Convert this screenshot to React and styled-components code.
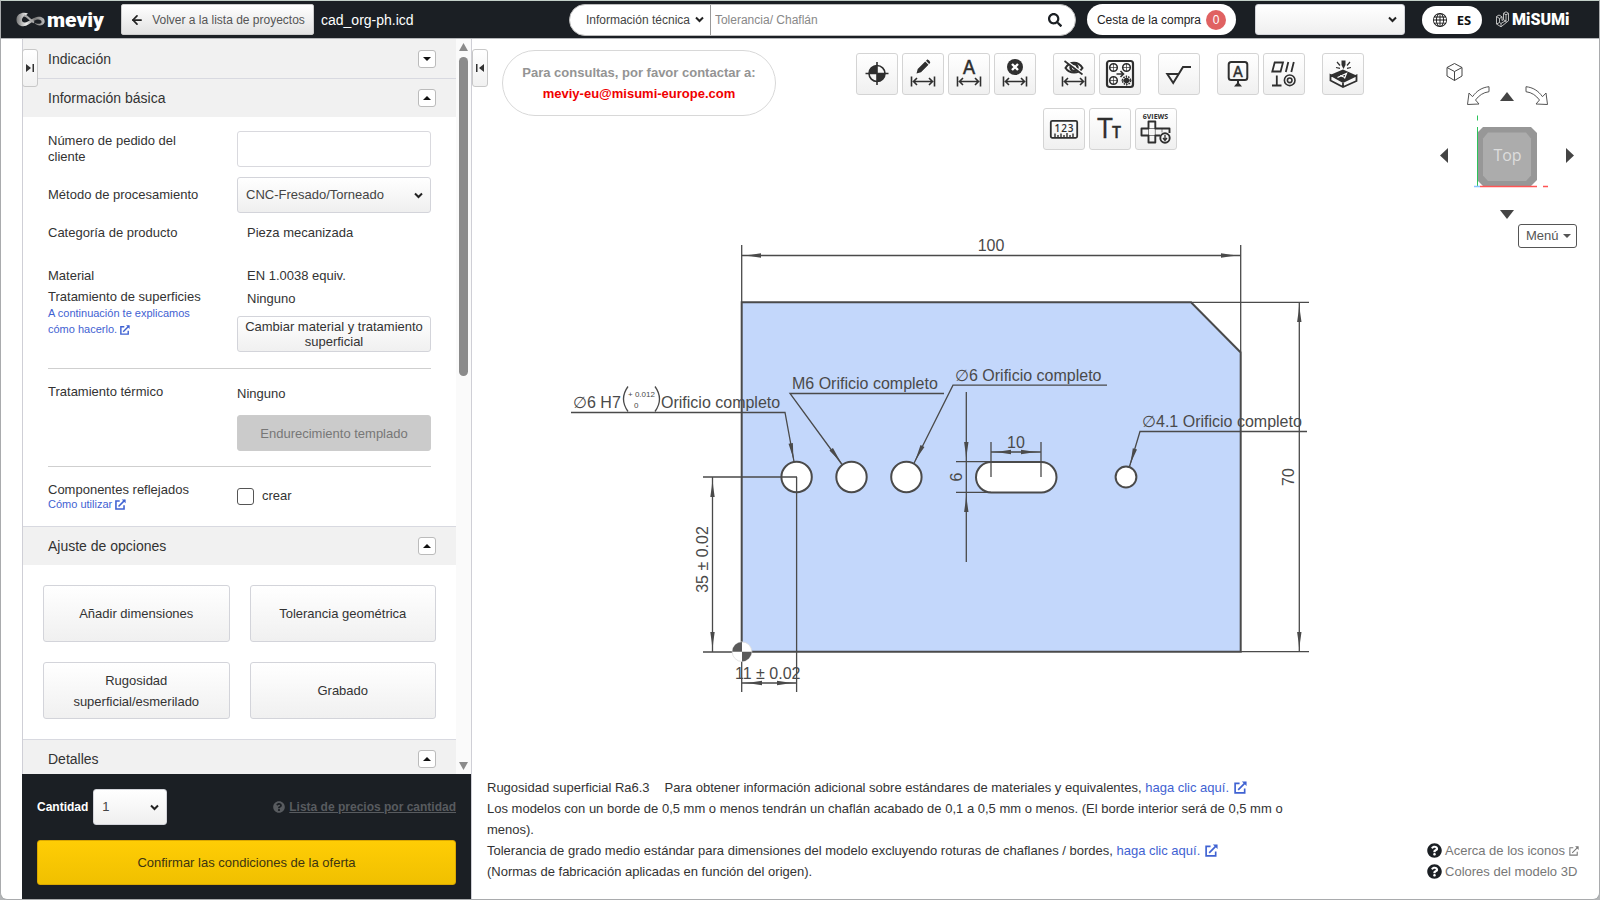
import styled, { createGlobalStyle } from "styled-components";
import { ArrowLeft } from "lucide-react";
import { FaSearch, FaQuestionCircle } from "react-icons/fa";
import { BsGlobe } from "react-icons/bs";

const GlobalStyle = createGlobalStyle`
  * {
    box-sizing: border-box;
  }
  body {
    margin: 0;
    background: #b4b6b8;
    font-family: "Liberation Sans", Arial, sans-serif;
    font-size: 13px;
    line-height: 16px;
    color: #333;
  }
  button, input, select {
    font: inherit;
    color: inherit;
    margin: 0;
  }
  button {
    cursor: pointer;
    padding: 0;
  }
  a {
    color: #3f62d2;
    text-decoration: none;
  }
  svg {
    display: block;
  }
`;

const Page = styled.div`
  height: 100vh;
  display: flex;
  flex-direction: column;
  background: #fff;
  border: 1px solid #a9abad;
  border-top-color: #c3d0c8;
  border-radius: 0 0 7px 7px;
  overflow: hidden;
`;

/* header */

const Header = styled.header`
  flex: none;
  height: 38px;
  display: flex;
  align-items: center;
  background: #1b1f24;
  border-bottom: 1px solid #b5b7ba;
  color: #fff;
  padding: 0 29px 0 15px;
`;
const Meviy = styled.div`
  display: flex;
  align-items: center;
  gap: 2px;
  width: 105px;
  font-family: Roboto, sans-serif;
  font-weight: 900;
  font-size: 21px;
  line-height: 30px;
`;
const BackButton = styled.button`
  height: 31px;
  width: 193px;
  display: flex;
  align-items: center;
  justify-content: center;
  gap: 8px;
  border: 1px solid #ccc;
  border-radius: 2px;
  background: linear-gradient(#fff, #e2e2e2);
  color: #555;
  font-size: 12px;
  svg {
    color: #222;
  }
`;
const FileName = styled.h1`
  margin: 0 auto 0 7px;
  font-size: 14px;
  font-weight: 400;
`;
const SearchForm = styled.form`
  display: flex;
  align-items: center;
  width: 507px;
  height: 32px;
  padding: 0 13px 0 8px;
  border-radius: 16px;
  background: #fff;
  border: 1px solid #bbb;
  color: #333;
  font-size: 12px;
  input {
    flex: 1;
    min-width: 0;
    height: 30px;
    border: 0;
    border-left: 1px solid #999;
    padding: 0 4px;
    outline: none;
  }
  input::placeholder {
    color: #888;
    opacity: 1;
  }
  button {
    border: 0;
    background: none;
    color: #1b1f24;
  }
`;
const Cart = styled.a`
  display: flex;
  align-items: center;
  gap: 5px;
  height: 31px;
  margin-left: 11px;
  padding: 0 10px;
  border-radius: 16px;
  background: #fff;
  color: #222;
  font-size: 12px;
`;
const Badge = styled.span`
  width: 20px;
  border-radius: 10px;
  background: #e06262;
  color: #fff;
  text-align: center;
  line-height: 20px;
`;
const Language = styled.button`
  display: flex;
  align-items: center;
  justify-content: center;
  gap: 10px;
  width: 60px;
  height: 28px;
  margin: 0 14px 0 17px;
  border: 0;
  border-radius: 14px;
  background: #fff;
  color: #111;
  font: 700 13px "Open Sans", sans-serif;
`;
const Misumi = styled.div`
  display: flex;
  align-items: center;
  gap: 3px;
  width: 74px;
  font: 900 16px/30px Roboto, sans-serif;
`;

/* form controls */

const SelectWrap = styled.span`
  display: inline-grid;
  align-items: center;
  width: ${(props) => props.$width || "100%"};
  margin-left: ${(props) => props.$left || "0"};
  select {
    grid-area: 1 / 1;
    width: 100%;
    height: ${(props) => props.$height || "36px"};
    padding: 0 16px 0 8px;
    appearance: none;
    outline: none;
    border: ${(props) => (props.$plain ? "0" : "1px solid #d3d4da")};
    border-radius: 3px;
    background: ${(props) => (props.$plain ? "#fff" : "linear-gradient(#fff, #efefef)")};
    color: #444;
  }
  svg {
    grid-area: 1 / 1;
    justify-self: end;
    margin-right: ${(props) => (props.$plain ? "6px" : "8px")};
    pointer-events: none;
  }
`;
const TextBox = styled.input`
  width: 100%;
  height: 36px;
  padding: 0 8px;
  border: 1px solid #d9d9de;
  border-radius: 3px;
`;
const Button = styled.button`
  width: 100%;
  height: ${(props) => (props.$tall ? "57px" : "36px")};
  border: 1px solid #d3d4da;
  border-radius: 3px;
  background: linear-gradient(#fff, #f0f0f0);
  color: #333;
  line-height: ${(props) => (props.$tall ? "21px" : "15px")};
  &:disabled {
    border-color: #ccc;
    background: #cbcbcb;
    color: #777;
    cursor: default;
  }
`;

/* sidebar */

const Body = styled.div`
  flex: 1;
  min-height: 0;
  display: flex;
  padding-left: 21px;
`;
const Sidebar = styled.aside`
  position: relative;
  flex: none;
  width: 450px;
  display: flex;
  flex-direction: column;
  border: 0 solid #cfcfd6;
  border-width: 0 1px 0 1px;
`;
const Scroller = styled.div`
  flex: 1;
  min-height: 0;
  display: flex;
`;
const Sections = styled.div`
  flex: 1;
  overflow: hidden;
`;
const ScrollTrack = styled.div`
  width: 15px;
  display: flex;
  flex-direction: column;
  align-items: center;
  padding: 4px 0;
  background: #fafafa;
`;
const ScrollThumb = styled.div`
  width: 9px;
  height: 319px;
  margin: 6px 0 auto;
  border-radius: 5px;
  background: #8b8b8b;
`;
const SectionHead = styled.div`
  display: flex;
  align-items: center;
  justify-content: space-between;
  height: 39px;
  padding: 0 20px 0 25px;
  border-top: 1px solid ${(props) => (props.$first ? "#f1f1f1" : "#d8d9e0")};
  background: #f1f1f1;
  h2 {
    margin: 0;
    font-size: 14px;
    font-weight: 400;
  }
  button {
    width: 18px;
    height: 18px;
    display: grid;
    place-items: center;
    border: 1px solid #bbb;
    border-radius: 3px;
    background: #fff;
    color: #111;
  }
`;
const Form = styled.div`
  padding: 14px 25px 16px;
`;
const Row = styled.div`
  display: grid;
  grid-template-columns: 160px 194px;
  justify-content: start;
  column-gap: 29px;
  align-items: ${(props) => props.$align || "center"};
  margin-top: ${(props) => props.$gap || "0"};
  label, p {
    margin: 0;
  }
`;
const Value = styled.div`
  padding: ${(props) => (props.$flush ? "2px 0" : "2px 10px")};
  margin-bottom: ${(props) => props.$below || "0"};
`;
const Hint = styled.a`
  display: ${(props) => (props.$block ? "block" : "flex")};
  gap: 3px;
  align-items: center;
  font-size: 11px;
  line-height: ${(props) => (props.$block ? "16px" : "12px")};
  svg {
    display: inline-block;
    vertical-align: -2px;
  }
`;
const Rule = styled.hr`
  width: 383px;
  margin: ${(props) => props.$top} 0 0;
  border: 0;
  border-top: 1px solid #cfcfcf;
`;
const Check = styled.label`
  display: flex;
  align-items: center;
  gap: 8px;
  input {
    appearance: none;
    width: 17px;
    height: 17px;
    border: 1px solid #555;
    border-radius: 3px;
    background: #fff;
  }
`;
const Options = styled.div`
  display: grid;
  grid-template-columns: 1fr 1fr;
  gap: 20px;
  padding: 20px;
`;
const Order = styled.div`
  flex: none;
  height: 125px;
  margin-left: -1px;
  padding: 15px;
  background: #1b1f24;
  color: #fff;
`;
const OrderRow = styled.div`
  display: flex;
  align-items: center;
  gap: 5px;
  font-size: 12px;
  font-weight: 700;
  select {
    font-size: 13px;
    font-weight: 400;
  }
`;
const PriceLink = styled.a`
  display: flex;
  gap: 4px;
  align-items: center;
  margin-left: auto;
  color: #585b5f;
  span {
    text-decoration: underline;
  }
`;
const Confirm = styled.button`
  width: 100%;
  height: 45px;
  margin-top: 15px;
  border: 1px solid #dba800;
  border-radius: 3px;
  background: linear-gradient(#ffcd05, #f0c000);
  color: #3c3411;
`;
const Handle = styled.button`
  position: absolute;
  top: 10px;
  ${(props) => (props.$right ? "right: -17px;" : "left: -1px;")}
  width: 16px;
  height: 38px;
  display: grid;
  place-items: center;
  border: 1px solid #c8c8c8;
  border-radius: 3px;
  background: linear-gradient(#fff, #f1f1f1);
  z-index: 1;
`;

/* viewer */

const Viewer = styled.main`
  flex: 1;
  min-width: 0;
  display: flex;
  flex-direction: column;
`;
const Stage = styled.div`
  flex: 1;
  min-height: 0;
  display: flex;
`;
const Work = styled.div`
  flex: 1;
  min-width: 0;
`;
const Top = styled.div`
  display: flex;
  height: 196px;
  padding: 11px 0 0 30px;
`;
const Contact = styled.div`
  flex: none;
  width: 274px;
  height: 66px;
  padding: 11px 0;
  border: 1px solid #d8d8d8;
  border-radius: 33px;
  text-align: center;
  font-weight: 700;
  line-height: 21px;
  color: #949494;
  a {
    color: #f00000;
  }
`;
const Toolbar = styled.div`
  flex: 1;
  display: flex;
  flex-direction: column;
  align-items: center;
  gap: 13px;
  padding: 3px 0 0 6px;
`;
const ToolRow = styled.div`
  display: flex;
  gap: 17px;
`;
const ToolGroup = styled.div`
  display: flex;
  gap: 4px;
`;
const Tool = styled.button`
  width: 42px;
  height: 42px;
  border: 1px solid #d4d4d4;
  border-radius: 3px;
  background: linear-gradient(#fff, #f0f0f0);
  color: #2f2f2f;
`;
const Drawing = styled.svg`
  width: 760px;
  max-width: 100%;
  height: 465px;
  margin-left: 88px;
  font-family: "Liberation Sans", Arial, sans-serif;
  font-size: 16px;
`;
const Navigator = styled.div`
  flex: none;
  width: 162px;
  padding: 23px 22px 0 0;
  display: flex;
  flex-direction: column;
  align-items: center;
`;
const NavButton = styled.button`
  border: 0;
  background: none;
  color: #444;
  align-self: ${(props) => props.$self || "auto"};
  margin: ${(props) => props.$space || "0"};
`;
const NavRow = styled.div`
  display: flex;
  align-items: center;
  justify-content: space-between;
  width: ${(props) => props.$width};
  margin-top: ${(props) => props.$gap};
`;
const MenuButton = styled.button`
  align-self: flex-end;
  display: flex;
  align-items: center;
  justify-content: space-between;
  width: 59px;
  height: 24px;
  margin-top: 5px;
  padding: 0 5px 0 7px;
  border: 1px solid #555;
  border-radius: 3px;
  background: #fff;
  color: #555;
`;
const Notes = styled.footer`
  flex: none;
  display: flex;
  justify-content: space-between;
  align-items: flex-end;
  padding: 0 20px 17px 15px;
  line-height: 21px;
  p {
    margin: 0;
    max-width: 810px;
  }
  svg {
    display: inline-block;
    vertical-align: -2px;
    margin-left: 1px;
  }
`;
const Ra = styled.span`
  margin-right: 15px;
`;
const Help = styled.div`
  display: flex;
  flex-direction: column;
  a {
    display: flex;
    align-items: center;
    gap: 3px;
    color: #777;
  }
  a svg:first-child {
    color: #1b1f24;
  }
`;

/* small icons */

const Chevron = ({ size = 9, color = "#222" }) => (
  <svg width={size} height={size} viewBox="0 0 9 9" fill="none" stroke={color} strokeWidth="2">
    <path d="M1 2.5l3.5 3.5L8 2.5" />
  </svg>
);

const External = ({ size = 13, stroke = 1.8 }) => (
  <svg width={size} height={size} viewBox="0 0 14 14" fill="none" stroke="currentColor" strokeWidth={stroke}>
    <path d="M6 2.5H1.2v10.3h10.3V8M4.5 9.5L12.5 1.5" />
    <path d="M8.5 .5h5v5z" fill="currentColor" stroke="none" />
  </svg>
);

const Triangle = ({ dir, w = 9, h = 5, color = "currentColor" }) => {
  const points = {
    up: `0,${h} ${w / 2},0 ${w},${h}`,
    down: `0,0 ${w},0 ${w / 2},${h}`,
    left: `${w},0 0,${h / 2} ${w},${h}`,
    right: `0,0 ${w},${h / 2} 0,${h}`,
  };
  return (
    <svg width={w} height={h} fill={color}>
      <polygon points={points[dir]} />
    </svg>
  );
};

const MeviyMark = () => (
  <svg width="29" height="16" viewBox="0 0 29 16" fill="none">
    <defs>
      <linearGradient id="mark" x1="0" x2="1">
        <stop offset="0" stopColor="#777" />
        <stop offset="0.35" stopColor="#eee" />
        <stop offset="0.65" stopColor="#777" />
        <stop offset="1" stopColor="#bbb" />
      </linearGradient>
    </defs>
    <path
      d="M12 1.500C7-.5 1 1.500.5 7C0 12.500 5 15.500 10 13.800C14 12.400 17 8.500 21 7.500C24 7 26 8.500 25.500 10.500C24.500 12.500 21 12 18 10.500C21 14.500 27 14.500 28.500 10.500C29.500 6 25 4 21 5C16 6 13 10 9 10.500C6.500 10.800 5 8.500 6.500 6C8 3.500 10 3.500 12 1.500Z"
      fill="url(#mark)"
    />
    <path d="M8 3.500C11.500 3.500 13.500 8 18 10.500" stroke="#aaa" strokeWidth="2" />
  </svg>
);

const MisumiMark = () => (
  <svg width="13" height="17" viewBox="0 0 13 17" fill="none" stroke="#ccc" strokeWidth="0.9">
    <path d="M.5 5.500l2.500-1.500 3 1.800v3.700l1.500-.8V2.300L10 .800l2.500 1.500v7.500L5 15.800.500 13zM.500 5.500l3 2v4M3.500 7.500L6 6M7.500 2.300L10 3.800l2.500-1.500M10 3.800v7.700M5 15.800V12.500M5 12.500l5-3M.500 13l3-1.500L5 12.500M7.500 8.700l2.500 1.500" />
  </svg>
);

/* toolbar icons, drawn on the 42px button grid */

const ToolIcon = ({ children }) => (
  <svg width="40" height="40" viewBox="1 1 40 40" fill="none" stroke="currentColor" strokeWidth="1.6">
    {children}
  </svg>
);

const DimensionBar = () => (
  <path d="M9.500 23.500v10M32.500 23.500v10M11.500 28.500h19M15 25l-3.500 3.500L15 32M27 25l3.500 3.500L27 32" />
);

const icons = {
  origin: (
    <>
      <circle cx="21" cy="20.500" r="8" />
      <path d="M21 20.500V12.500A8 8 0 0 0 13 20.500zM21 20.500v8a8 8 0 0 0 8-8z" fill="currentColor" stroke="none" />
      <path d="M21 9v23M9.500 20.500h23" />
    </>
  ),
  edit: (
    <>
      <path d="M14.500 20.500l1.200-4.500 7.500-7.500 3.300 3.300-7.500 7.500zM24 7.700l1-1c.8-.7 3.900 2.300 3.100 3.200l-1 1z" fill="currentColor" stroke="none" />
      <DimensionBar />
    </>
  ),
  text: (
    <>
      <text x="21" y="20.500" textAnchor="middle" fontFamily="Inter" fontSize="19" fontWeight="400" fill="currentColor" strokeWidth="0.400">A</text>
      <DimensionBar />
    </>
  ),
  remove: (
    <>
      <circle cx="21" cy="14" r="8" fill="currentColor" stroke="none" />
      <path d="M18 11l6 6M24 11l-6 6" stroke="#fff" strokeWidth="2.400" />
      <DimensionBar />
    </>
  ),
  hide: (
    <>
      <path d="M12.500 15c4-7 13-7 17 0-4 6-13 6-17 0z" strokeWidth="2" />
      <circle cx="21" cy="14.500" r="3.500" strokeWidth="2.400" />
      <path d="M13.500 8l17 13" stroke="#fff" strokeWidth="2" />
      <path d="M11.500 8l18 13.500" />
      <DimensionBar />
    </>
  ),
  pattern: (
    <>
      <rect x="8" y="8" width="26" height="26" rx="2.500" strokeWidth="2.200" />
      <circle cx="14.500" cy="14.500" r="3.800" />
      <circle cx="27.500" cy="14.500" r="3.800" />
      <circle cx="14.500" cy="27.500" r="3.800" />
      <circle cx="27.500" cy="27.500" r="4" strokeDasharray="1.500 1" />
      <circle cx="27.500" cy="27.500" r="2" fill="currentColor" />
      <path d="M14.500 10.500v8M10.500 14.500h8M27.500 10.500v8M23.500 14.500h8M14.500 23.500v8M10.500 27.500h8M27.500 22.500v10M22.500 27.500h10" strokeWidth="0.700" />
      <path d="M17.500 21h6.500M21.500 18l3 3-3 3" />
    </>
  ),
  roughness: <path d="M20.500 21H9.300L15.200 30 25 14h8" strokeWidth="2" />,
  datum: (
    <>
      <rect x="11.700" y="9" width="18.600" height="18" rx="2.500" strokeWidth="2" />
      <text x="21" y="23.500" textAnchor="middle" fontFamily="Inter" fontSize="15" fontWeight="400" fill="currentColor" strokeWidth="0.400">A</text>
      <path d="M21 27v5" strokeWidth="2" />
      <path d="M17 33.500l2.500-3h3l2.500 3z" fill="currentColor" stroke="none" />
    </>
  ),
  geometric: (
    <>
      <path d="M9.300 18.500l2.400-9h8.300l-2.400 9zM22.800 19l2.500-10M28.300 19l2.500-10M9 32.500h9.500M13.800 22.500v10" strokeWidth="1.800" />
      <circle cx="26.700" cy="27.300" r="5.300" />
      <circle cx="26.700" cy="27.300" r="2.300" />
    </>
  ),
  engrave: (
    <>
      <path d="M8 22l13-5.500 13.500 6L21 29z" fill="currentColor" stroke="none" />
      <path d="M8.500 22v5.500L21 34l13.500-6v-5.500L21 29zM21 29v5" strokeWidth="1.800" />
      <path d="M15.500 24.500l9-4-2 5M18 22.500l5 2" stroke="#fff" strokeWidth="1.200" />
      <path d="M19.500 7.500h4v4.500l-2 4-2-4z" fill="currentColor" stroke="none" />
      <path d="M15 9l3 3.500M28 9l-3 3.500M14 14.500l4 .8M29 14.500l-4 .8" strokeWidth="1.200" />
    </>
  ),
  ruler: (
    <>
      <rect x="7.800" y="12.800" width="26.400" height="17" rx="1.500" strokeWidth="1.800" />
      <text x="21.500" y="23.500" textAnchor="middle" fontFamily="Open Sans" fontSize="10" fontWeight="600" letterSpacing="1" fill="currentColor" stroke="none">123</text>
      <path d="M12 29v-3.500M15 29v-2M18 29v-3.500M21 29v-2M24 29v-4M27 29v-2M30 29v-3.500" strokeWidth="1.400" />
    </>
  ),
  fontSize: (
    <g fill="currentColor" strokeWidth="0.300" fontFamily="Open Sans">
      <text x="16" y="30" textAnchor="middle" fontSize="28">T</text>
      <text x="27.500" y="30" textAnchor="middle" fontSize="16" fontWeight="600">T</text>
    </g>
  ),
  views: (
    <>
      <text x="20.500" y="10.500" textAnchor="middle" fontFamily="Open Sans" fontSize="7" fontWeight="700" fill="currentColor" stroke="none">6VIEWS</text>
      <path d="M34.500 25v-4.500H20.300v-7h-6.800v7h-7v7h7v7h6.800v-7H25" strokeWidth="1.900" strokeLinejoin="round" />
      <path d="M13.500 20.500h6.800v7h-6.800zM27 20.500v4" strokeWidth="0.600" />
      <circle cx="30" cy="30" r="4.700" strokeWidth="1.900" />
      <path d="M30 27v5M28 30l2 2.500 2-2.500" strokeWidth="1.300" />
    </>
  ),
};

const toolRows = [
  [
    [["origin", "Origen"], ["edit", "Editar cota"], ["text", "Texto"], ["remove", "Eliminar"]],
    [["hide", "Ocultar"], ["pattern", "Patrón"]],
    [["roughness", "Rugosidad"]],
    [["datum", "Referencia"], ["geometric", "Tolerancia geométrica"]],
    [["engrave", "Grabado"]],
  ],
  [[["ruler", "Medir"], ["fontSize", "Tamaño de texto"], ["views", "6 vistas"]]],
];

/* drawing of the part */

// Slim arrow head whose tip is at (x, y), turned by angle degrees (0 points right)
const Head = ({ x, y, angle }) => (
  <polygon
    points="0,0 -9,-0.800 -19,-2.200 -19,2.200 -9,0.800"
    transform={`translate(${x} ${y}) rotate(${angle})`}
    fill="#4a4a4a"
    stroke="none"
  />
);

const Label = ({ x, y, rotate, anchor = "start", size, children }) => (
  <text
    x={x}
    y={y}
    fontSize={size}
    textAnchor={anchor}
    transform={rotate ? `rotate(-90 ${x} ${y})` : undefined}
    fill="#4a4a4a"
    stroke="none"
  >
    {children}
  </text>
);

const PartDrawing = () => (
  <Drawing viewBox="560 235 760 465" fill="none" stroke="#4a4a4a" strokeWidth="1.300">
    <path d="M741.700 302.300H1191l49.700 50.200v299.300h-499z" fill="#c3d7fb" strokeWidth="2" />
    <g fill="#fff" strokeWidth="2">
      <circle cx="796.600" cy="477" r="15.200" />
      <circle cx="851.500" cy="477" r="15.200" />
      <circle cx="906.400" cy="477" r="15.200" />
      <rect x="976" y="462" width="80.500" height="30.400" rx="15.200" />
      <circle cx="1126" cy="477" r="10.400" />
    </g>

    {/* overall width and height */}
    <path d="M741.700 245v57M1240.700 245v107M742 255.500h499" />
    <Head x={742} y={255.5} angle={180} />
    <Head x={1240} y={255.5} angle={0} />
    <Label x={991} y={251} anchor="middle">100</Label>
    <path d="M1191 302.300h118M1241 651.700h68M1299.300 302v350" />
    <Head x={1299.3} y={303} angle={-90} />
    <Head x={1299.3} y={651} angle={90} />
    <Label x={1294} y={477} rotate anchor="middle">70</Label>

    {/* hole position from the origin */}
    <path d="M703 477h94M703 652h39M712.500 477v175M796.600 477v215M741.700 652v40M742 683h55" />
    <Head x={712.5} y={478} angle={-90} />
    <Head x={712.5} y={651} angle={90} />
    <Head x={743} y={683} angle={180} />
    <Head x={796} y={683} angle={0} />
    <Label x={708} y={559.5} rotate anchor="middle">35 ± 0.02</Label>
    <Label x={735} y={678.5}>11 ± 0.02</Label>

    {/* slot */}
    <path d="M991 442v35M1041 442v35M991 452h50M956 461.700h35M956 492.300h35M966.300 392v170" />
    <Head x={992} y={452} angle={180} />
    <Head x={1040} y={452} angle={0} />
    <Head x={966.3} y={461} angle={90} />
    <Head x={966.3} y={493} angle={-90} />
    <Label x={1016} y={447.5} anchor="middle">10</Label>
    <Label x={961.5} y={477} rotate anchor="middle">6</Label>

    {/* hole callouts */}
    <path d="M571 412.500h214l9 49" />
    <Head x={794} y={462} angle={80} />
    <Label x={573} y={408}>∅6 H7</Label>
    <path d="M628 386.500q-9 12.500 0 25M655 386.500q9 12.500 0 25" />
    <Label x={628} y={396.500} size={8}>+ 0.012</Label>
    <Label x={634} y={408} size={8}>0</Label>
    <Label x={661} y={408}>Orificio completo</Label>

    <path d="M944 393.500H790l52 71" />
    <Head x={842.5} y={464.5} angle={53.5} />
    <Label x={792} y={389}>M6 Orificio completo</Label>

    <path d="M1107 385.200H953l-39 78" />
    <Head x={914} y={463} angle={116.5} />
    <Label x={955} y={380.5}>∅6 Orificio completo</Label>

    <path d="M1307 431.500h-167l-10.500 35" />
    <Head x={1129.5} y={467} angle={106.5} />
    <Label x={1142} y={427}>∅4.1 Orificio completo</Label>

    <g stroke="none">
      <circle cx="742" cy="651.700" r="9.800" fill="#fff" stroke="#ddd" strokeWidth="0.800" />
      <path d="M742 651.700V642a9.700 9.700 0 0 0-9.700 9.700zM742 651.700v9.700a9.700 9.700 0 0 0 9.700-9.700z" fill="#5a5a5a" />
    </g>
  </Drawing>
);

const TurnArrow = ({ flip }) => (
  <svg width="23" height="20" viewBox="0 0 23 20" fill="#fff" stroke="#555">
    <path
      d="M22 .700v5C16 6.500 12 9.500 8.500 14l3.500 4-11.500.500L2 7l3.500 3.700C10 4.500 15 1.500 22 .700z"
      transform={flip ? "translate(23 0) scale(-1 1)" : undefined}
    />
  </svg>
);

const ViewCube = () => (
  <svg width="100" height="86" viewBox="1457 112 100 86">
    <path d="M1483 127h48l6 6v47l-6 6h-48l-6-6v-47z" fill="#979797" />
    <path d="M1488 132.500h38l5 6v37l-5 5.500h-38l-5-5.500v-37z" fill="#acacac" />
    <text x="1507.500" y="160.500" textAnchor="middle" fontFamily="Open Sans" fontSize="16" fill="#ddd">Top</text>
    <path d="M1477.500 115.500v5M1477.500 127v59" stroke="#2cc45a" />
    <path d="M1480 186.500h57M1543 186.500h5" stroke="#f55" strokeWidth="1.500" />
    <path d="M1474 186.500h6" stroke="#8cc4ff" strokeWidth="1.500" />
  </svg>
);

const Section = ({ title, open = true, first, children }) => (
  <section>
    <SectionHead $first={first}>
      <h2>{title}</h2>
      <button aria-label={title}>
        <Triangle dir={open ? "up" : "down"} w={8} h={4} />
      </button>
    </SectionHead>
    {open && children}
  </section>
);

const Select = ({ id, label, value, ...rest }) => (
  <SelectWrap {...rest}>
    <select id={id} aria-label={label}>
      <option>{value}</option>
    </select>
    <Chevron />
  </SelectWrap>
);

const TopBar = () => (
  <Header>
    <Meviy>
      <MeviyMark />
      meviy
    </Meviy>
    <BackButton>
      <ArrowLeft size={14} strokeWidth={3} />
      Volver a la lista de proyectos
    </BackButton>
    <FileName>cad_org-ph.icd</FileName>
    <SearchForm>
      <Select label="Tipo de búsqueda" value="Información técnica" $plain $width="132px" $height="28px" />
      <input type="text" aria-label="Buscar" placeholder="Tolerancia/ Chaflán" />
      <button type="button" aria-label="Buscar">
        <FaSearch size={14} />
      </button>
    </SearchForm>
    <Cart href="#cesta">
      Cesta de la compra
      <Badge>0</Badge>
    </Cart>
    <Select label="Cuenta" value="" $width="150px" $height="31px" $left="19px" />
    <Language>
      <BsGlobe size={14} />
      ES
    </Language>
    <Misumi>
      <MisumiMark />
      MiSUMi
    </Misumi>
  </Header>
);

const SidePanel = () => (
  <Sidebar>
    <Handle aria-label="Ocultar panel">
      <svg width="8" height="8" fill="#333">
        <path d="M0 0l5 4-5 4zM6.500 0H8v8H6.500z" />
      </svg>
    </Handle>
    <Handle $right aria-label="Contraer panel">
      <svg width="8" height="8" fill="#333">
        <path d="M8 0L3 4l5 4zM0 0h1.500v8H0z" />
      </svg>
    </Handle>
    <Scroller>
      <Sections>
        <Section title="Indicación" open={false} first />
        <Section title="Información básica">
          <Form>
            <Row>
              <label htmlFor="pedido">Número de pedido del cliente</label>
              <TextBox id="pedido" type="text" />
            </Row>
            <Row $gap="10px">
              <label htmlFor="metodo">Método de procesamiento</label>
              <Select id="metodo" value="CNC-Fresado/Torneado" />
            </Row>
            <Row $gap="10px">
              <p>Categoría de producto</p>
              <Value>Pieza mecanizada</Value>
            </Row>
            <Row $gap="23px">
              <p>Material</p>
              <Value>EN 1.0038 equiv.</Value>
            </Row>
            <Row $gap="3px" $align="start">
              <div>
                <p>Tratamiento de superficies</p>
                <Hint href="#tratamiento" $block>
                  A continuación te explicamos cómo hacerlo. <External size={10} stroke={2} />
                </Hint>
              </div>
              <div>
                <Value $below="7px">Ninguno</Value>
                <Button>Cambiar material y tratamiento superficial</Button>
              </div>
            </Row>
            <Rule $top="16px" />
            <Row $gap="15px" $align="start">
              <p>Tratamiento térmico</p>
              <div>
                <Value $flush $below="11px">Ninguno</Value>
                <Button disabled>Endurecimiento templado</Button>
              </div>
            </Row>
            <Rule $top="15px" />
            <Row $gap="15px">
              <div>
                <p>Componentes reflejados</p>
                <Hint href="#reflejados">
                  Cómo utilizar <External size={11} stroke={2} />
                </Hint>
              </div>
              <Check>
                <input type="checkbox" />
                crear
              </Check>
            </Row>
          </Form>
        </Section>
        <Section title="Ajuste de opciones">
          <Options>
            <Button $tall>Añadir dimensiones</Button>
            <Button $tall>Tolerancia geométrica</Button>
            <Button $tall>
              Rugosidad superficial/esmerilado
            </Button>
            <Button $tall>Grabado</Button>
          </Options>
        </Section>
        <Section title="Detalles" />
      </Sections>
      <ScrollTrack>
        <Triangle dir="up" w={9} h={8} color="#8b8b8b" />
        <ScrollThumb />
        <Triangle dir="down" w={9} h={8} color="#8b8b8b" />
      </ScrollTrack>
    </Scroller>
    <Order>
      <OrderRow>
        <label htmlFor="cantidad">Cantidad</label>
        <Select id="cantidad" value="1" $width="74px" />
        <PriceLink href="#precios">
          <FaQuestionCircle size={12} />
          <span>Lista de precios por cantidad</span>
        </PriceLink>
      </OrderRow>
      <Confirm>Confirmar las condiciones de la oferta</Confirm>
    </Order>
  </Sidebar>
);

export default function App() {
  return (
    <Page>
      <GlobalStyle />
      <TopBar />
      <Body>
        <SidePanel />
        <Viewer>
          <Stage>
            <Work>
              <Top>
                <Contact>
                  Para consultas, por favor contactar a:
                  <br />
                  <a href="mailto:meviy-eu@misumi-europe.com">meviy-eu@misumi-europe.com</a>
                </Contact>
                <Toolbar>
                  {toolRows.map((groups, i) => (
                    <ToolRow key={i}>
                      {groups.map((tools, j) => (
                        <ToolGroup key={j}>
                          {tools.map(([name, label]) => (
                            <Tool key={name} aria-label={label}>
                              <ToolIcon>{icons[name]}</ToolIcon>
                            </Tool>
                          ))}
                        </ToolGroup>
                      ))}
                    </ToolRow>
                  ))}
                </Toolbar>
              </Top>
              <PartDrawing />
            </Work>
            <Navigator>
              <NavButton $self="flex-start" $space="0 0 0 9px" aria-label="Vista isométrica">
                <svg width="17" height="20" viewBox="0 0 17 20" fill="none" stroke="currentColor">
                  <path d="M8.500 1.500l7.500 4v8.500l-7.500 4.500L1 14V5.500zM1 5.500l7.500 4 7.500-4M8.500 9.500v9" />
                </svg>
              </NavButton>
              <NavRow $width="81px" $gap="4px">
                <NavButton aria-label="Girar a la izquierda">
                  <TurnArrow />
                </NavButton>
                <NavButton aria-label="Arriba">
                  <Triangle dir="up" w={14} h={9} />
                </NavButton>
                <NavButton aria-label="Girar a la derecha">
                  <TurnArrow flip />
                </NavButton>
              </NavRow>
              <NavRow $width="134px" $gap="6px">
                <NavButton aria-label="Izquierda">
                  <Triangle dir="left" w={8} h={15} />
                </NavButton>
                <ViewCube />
                <NavButton aria-label="Derecha">
                  <Triangle dir="right" w={8} h={15} />
                </NavButton>
              </NavRow>
              <NavButton $space="12px 0 0" aria-label="Abajo">
                <Triangle dir="down" w={14} h={9} />
              </NavButton>
              <MenuButton>
                Menú
                <Triangle dir="down" w={8} h={4} />
              </MenuButton>
            </Navigator>
          </Stage>
          <Notes>
            <p>
              <Ra>Rugosidad superficial Ra6.3</Ra>
              Para obtener información adicional sobre estándares de materiales y equivalentes,{" "}
              <a href="#materiales">
                haga clic aquí. <External />
              </a>
              <br />
              Los modelos con un borde de 0,5 mm o menos tendrán un chaflán acabado de 0,1 a 0,5 mm o
              menos. (El borde interior será de 0,5 mm o menos).
              <br />
              Tolerancia de grado medio estándar para dimensiones del modelo excluyendo roturas de
              chaflanes / bordes,{" "}
              <a href="#tolerancias">
                haga clic aquí. <External />
              </a>
              <br />
              (Normas de fabricación aplicadas en función del origen).
            </p>
            <Help>
              <a href="#iconos">
                <FaQuestionCircle size={15} />
                Acerca de los iconos
                <External size={10} stroke={1.5} />
              </a>
              <a href="#colores">
                <FaQuestionCircle size={15} />
                Colores del modelo 3D
              </a>
            </Help>
          </Notes>
        </Viewer>
      </Body>
    </Page>
  );
}
